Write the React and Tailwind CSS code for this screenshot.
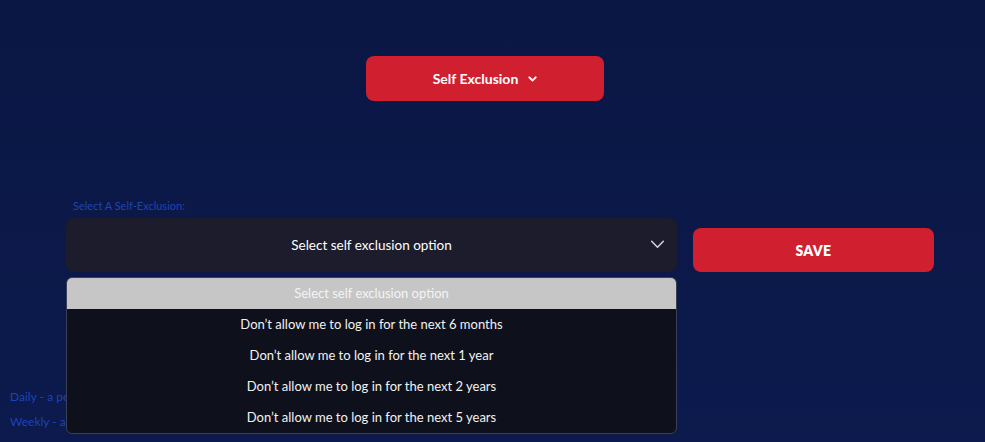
import React from 'react';

const options = [
  'Select self exclusion option',
  'Don’t allow me to log in for the next 6 months',
  'Don’t allow me to log in for the next 1 year',
  'Don’t allow me to log in for the next 2 years',
  'Don’t allow me to log in for the next 5 years',
];

const Chevron = ({ className }) => (
  <svg className={className} viewBox="0 0 16 10" fill="none" stroke="currentColor" strokeWidth="1.6" strokeLinecap="round" strokeLinejoin="round">
    <path d="M1.5 1.5 8 8l6.5-6.5" />
  </svg>
);

const App = () => {
  return (
    <div className="w-full h-[442px] overflow-hidden bg-gradient-to-b from-[#0a1744] to-[#0c1a4d] font-['Lato',sans-serif] text-white">
      {/* Top toggle */}
      <div className="flex justify-center pt-[56px] pr-[15px]">
        <button className="flex items-center justify-center gap-[10px] w-[238px] h-[45px] rounded-lg bg-[#d01f2f] text-[14px] font-bold">
          Self Exclusion
          <svg className="w-[9px] h-[6px]" viewBox="0 0 10 6" fill="none" stroke="currentColor" strokeWidth="2.2" strokeLinecap="round" strokeLinejoin="round">
            <path d="M1.5 1.2 5 4.6l3.5-3.4" />
          </svg>
        </button>
      </div>

      {/* Form */}
      <div className="flex items-end gap-4 pl-[66px] pt-[98px]">
        <div className="relative w-[611px]">
          <div className="pl-[7px] pb-[5px] text-[11px] leading-[14px] text-[#1d44b5]">Select A Self-Exclusion:</div>
          <div className="relative flex items-center justify-center h-[54px] rounded-lg bg-[#1c1c2c] text-[13.5px]">
            Select self exclusion option
            <Chevron className="absolute right-[12px] top-[22px] w-[15px] h-[9px] text-[#d9d9e0]" />
          </div>

          {/* Open dropdown */}
          <div className="absolute left-0 top-[78px] z-10 w-[611px] overflow-hidden rounded-md border border-[#3b4058] bg-[#0e111c]">
            {options.map((opt, i) => (
              <div
                key={i}
                className={`flex items-center justify-center h-[31px] text-[13px] ${i === 0 ? 'bg-[#c6c6c6] text-[#f4f4f4]' : 'text-[#f2f2f2]'}`}
              >
                {opt}
              </div>
            ))}
          </div>
        </div>
        <button className="w-[241px] h-[44px] rounded-lg bg-[#d01f2f] text-[14px] font-extrabold tracking-wide">
          SAVE
        </button>
      </div>

      {/* Text behind dropdown */}
      <div className="pl-[10px] pt-[112px] text-[12px] leading-[25px] text-[#1d44b5]">
        <p>Daily - a period of 24 hours</p>
        <p>Weekly - a period of 7 days</p>
      </div>
    </div>
  );
};

export default App;
